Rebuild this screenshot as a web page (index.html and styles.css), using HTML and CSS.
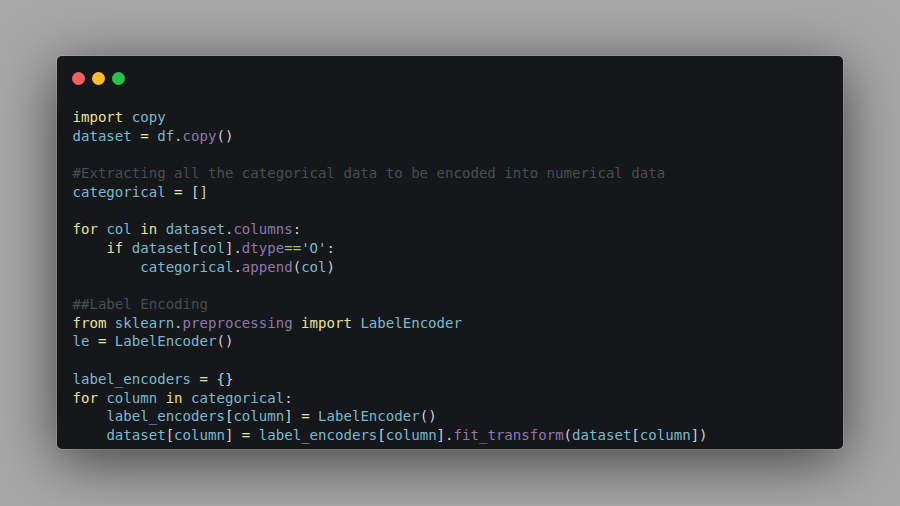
FILE: index.html
```html
<!DOCTYPE html>
<html lang="en">
<head>
<meta charset="utf-8">
<title>Code</title>
<link rel="stylesheet" href="styles.css">
</head>
<body>
<main class="window">
<div class="dots"><span class="dot red"></span><span class="dot yellow"></span><span class="dot green"></span></div>
<pre class="code"><span class="k">import</span> <span class="v">copy</span>
<span class="v">dataset</span> <span class="o">=</span> <span class="v">df</span><span class="p">.</span><span class="f">copy</span><span class="p">()</span>

<span class="c">#Extracting all the categorical data to be encoded into numerical data</span>
<span class="v">categorical</span> <span class="o">=</span> <span class="p">[]</span>

<span class="k">for</span> <span class="v">col</span> <span class="k">in</span> <span class="v">dataset</span><span class="p">.</span><span class="f">columns</span><span class="p">:</span>
    <span class="k">if</span> <span class="v">dataset</span><span class="p">[</span><span class="v">col</span><span class="p">].</span><span class="f">dtype</span><span class="s">==</span><span class="v">'O'</span><span class="p">:</span>
        <span class="v">categorical</span><span class="p">.</span><span class="f">append</span><span class="p">(</span><span class="v">col</span><span class="p">)</span>

<span class="c">##Label Encoding</span>
<span class="k">from</span> <span class="v">sklearn</span><span class="p">.</span><span class="f">preprocessing</span> <span class="k">import</span> <span class="v">LabelEncoder</span>
<span class="v">le</span> <span class="o">=</span> <span class="v">LabelEncoder</span><span class="p">()</span>

<span class="v">label_encoders</span> <span class="o">=</span> <span class="p">{}</span>
<span class="k">for</span> <span class="v">column</span> <span class="k">in</span> <span class="v">categorical</span><span class="p">:</span>
    <span class="v">label_encoders</span><span class="p">[</span><span class="v">column</span><span class="p">]</span> <span class="o">=</span> <span class="v">LabelEncoder</span><span class="p">()</span>
    <span class="v">dataset</span><span class="p">[</span><span class="v">column</span><span class="p">]</span> <span class="o">=</span> <span class="v">label_encoders</span><span class="p">[</span><span class="v">column</span><span class="p">].</span><span class="f">fit_transform</span><span class="p">(</span><span class="v">dataset</span><span class="p">[</span><span class="v">column</span><span class="p">])</span></pre>
</main>
</body>
</html>
```
FILE: styles.css
```css
html, body {
  height: 100%;
}
body {
  margin: 0;
  width: 900px;
  height: 506px;
  overflow: hidden;
  background: #a8a8a8;
  display: flex;
  padding: 56px 57px 57px;
  box-sizing: border-box;
}
.window {
  flex: 1;
  background: #15171a;
  border-radius: 5px;
  box-shadow: 0 0 0 1px rgba(255, 255, 255, 0.12), 0 12px 60px rgba(0, 0, 0, 0.62);
  padding: 16px 15.5px 0;
  box-sizing: border-box;
  display: flex;
  flex-direction: column;
}
.dots {
  display: flex;
  gap: 7px;
  height: 13px;
  margin-left: -1px;
}
.dot {
  width: 13px;
  height: 13px;
  border-radius: 50%;
}
.red { background: #f5605f; }
.yellow { background: #fdbc30; }
.green { background: #27c24c; }
.code {
  margin: 23px 0 0;
  font-family: "DejaVu Sans Mono", monospace;
  font-size: 14.07px;
  line-height: 18.7px;
  color: #c8ccd0;
}
.k { color: #eae29a; }
.v { color: #7db9d0; }
.f { color: #8e79ab; }
.p { color: #cdd0d2; }
.o { color: #e4e4a6; }
.s { color: #9fc46a; }
.c { color: #484e50; }
```
